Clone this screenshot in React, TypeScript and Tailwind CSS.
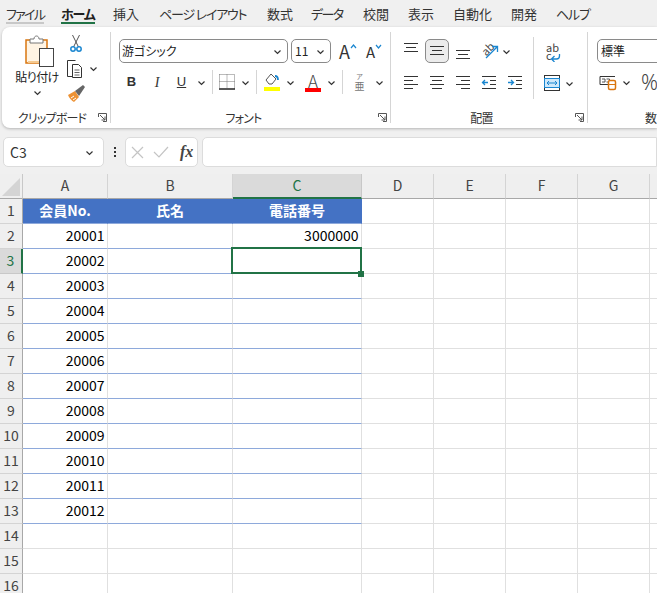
const jp = "font-['Noto_Sans_CJK_JP','Noto_Sans',sans-serif]";
const palt = "[font-feature-settings:'palt']";

const tabs = [
  { label: "ファイル", w: "w-[55px]", track: "tracking-[-1.7px]" },
  { label: "ホーム", w: "w-[52px]", track: "tracking-[-1.2px]" },
  { label: "挿入", w: "w-[46px]", track: "" },
  { label: "ページ レイアウト", w: "w-[108px]", track: "tracking-[-1.2px]" },
  { label: "数式", w: "w-[44px]", track: "" },
  { label: "データ", w: "w-[52px]", track: "tracking-[-1.6px]" },
  { label: "校閲", w: "w-[45px]", track: "" },
  { label: "表示", w: "w-[45px]", track: "" },
  { label: "自動化", w: "w-[58px]", track: "" },
  { label: "開発", w: "w-[45px]", track: "" },
  { label: "ヘルプ", w: "w-[50px]", track: "tracking-[-1.2px]" },
];

const Chev = ({ className = "" }: { className?: string }) => (
  <svg width="11" height="11" viewBox="0 0 11 11" fill="none" className={"shrink-0 " + className}>
    <path d="M2.500 4.500l3 3 3-3" stroke="#333" strokeWidth="1.200" />
  </svg>
);

const Launcher = () => (
  <svg width="9" height="9" viewBox="0 0 9 9" fill="none" stroke="#555" className="shrink-0">
    <path d="M.5 4V.5H8.500V8.500H5M2 2l5 5M7 3.500V7H3.500" />
  </svg>
);

const GroupLabel = ({ text, pad }: { text: string; pad: string }) => (
  <div className="mt-auto flex h-[11px] items-center pr-[3px]">
    <span className={"flex-1 text-center text-[12px] leading-[11px] tracking-[-0.8px] text-[#333] " + pad + " " + palt}>{text}</span>
    <Launcher />
  </div>
);

const Lines = ({ d, arrow }: { d: string; arrow?: string }) => (
  <svg width="16" height="20" viewBox="0 0 16 20" fill="none">
    <path d={d} stroke="#333" />
    {arrow && <path d={arrow} stroke="#1a86d0" strokeWidth="1.300" />}
  </svg>
);

const Combo = ({ text, className }: { text: string; className: string }) => (
  <div className={"flex h-[24px] items-center rounded-[5px] border border-[#8a8a8a] bg-white pr-[4px] " + className}>
    <span className={"flex-1 truncate text-[12px] text-[#222] " + palt}>{text}</span>
    <Chev />
  </div>
);

const VSep = () => <div className="mx-[5px] h-[24px] w-px bg-[#d5d5d5]" />;

const Caret = ({ up }: { up?: boolean }) => (
  <svg width="7" height="5" viewBox="0 0 7 5" fill="none" className="mb-[9px] shrink-0">
    <path d={up ? "M1 4l2.500-3L6 4" : "M1 1l2.500 3L6 1"} stroke="#1a86d0" strokeWidth="1.200" />
  </svg>
);

const ClipboardGroup = () => (
  <div className="my-[5px] flex w-[109px] shrink-0 flex-col border-r border-[#d5d5d5] pl-[6px]">
    <div className="flex">
      <div className="flex w-[58px] flex-col items-center">
        <svg width="30" height="33" viewBox="0 0 30 33" fill="none" className="ml-[5px] mt-[2px]">
          <rect x="1" y="6" width="21" height="23" fill="#fff4e4" stroke="#d9750f" strokeWidth="1.500" />
          <path d="M3 27h11v2H3z" fill="#f5c98f" />
          <path d="M5 9V5h4c0-4 5-4 5 0h4v4z" fill="#fff" stroke="#777" />
          <rect x="14.500" y="14.500" width="14" height="18" fill="#fff" stroke="#444" />
        </svg>
        <span className={"mt-[2px] text-[12px] leading-[16px] tracking-[-0.6px] text-[#222] " + palt}>貼り付け</span>
        <Chev className="mt-[2px]" />
      </div>
      <div className="flex flex-col pt-[2px]">
        <svg width="18" height="20" viewBox="0 0 18 20" fill="none" className="ml-[1px]">
          <path d="M5.500 1l6 12M12.500 1l-6 12" stroke="#555" />
          <circle cx="6" cy="15" r="2.200" stroke="#1a86d0" strokeWidth="1.500" />
          <circle cx="12" cy="15" r="2.200" stroke="#1a86d0" strokeWidth="1.500" />
        </svg>
        <div className="mt-[4px] flex items-center gap-[2px]">
          <svg width="20" height="20" viewBox="0 0 20 20" fill="none">
            <path d="M6.500 18.500h-5v-16h8" stroke="#333" />
            <path d="M6.500 6.500h6l3 3v10h-9z" fill="#fff" stroke="#333" />
            <path d="M8.500 12h5M8.500 14.500h5M8.500 17h5" stroke="#666" />
          </svg>
          <Chev />
        </div>
        <svg width="20" height="20" viewBox="0 0 20 20" className="mt-[6px]">
          <path d="M2 11l7-4 4 6-5 5c-2-1-5-4-6-7z" fill="#ed9234" />
          <path d="M5 14l3-2M7 16l3-2" stroke="#fff" />
          <path d="M9 7l8-6 2 2-6 9z" fill="#666" />
        </svg>
      </div>
    </div>
    <GroupLabel text="クリップボード" pad="pr-[2px]" />
  </div>
);

const FontGroup = () => (
  <div className="my-[5px] flex w-[280px] shrink-0 flex-col border-r border-[#d5d5d5] pl-[8px]">
    <div className="mt-[7px] flex gap-[3px]">
      <Combo text="游ゴシック" className="w-[169px] pl-[2px]" />
      <Combo text="11" className="w-[40px] pl-[3px]" />
      <div className="flex w-[55px] items-center pl-[5px] text-[#333]">
        <span className="text-[18px] leading-none">A</span>
        <Caret up />
        <span className="ml-[9px] text-[15px] leading-none">A</span>
        <Caret />
      </div>
    </div>
    <div className="mt-[6px] flex h-[26px] items-center text-[#333]">
      <span className="w-[25px] text-center font-['Liberation_Sans',sans-serif] text-[13px] font-bold">B</span>
      <span className="w-[26px] text-center font-['Liberation_Serif',serif] text-[14px] italic">I</span>
      <span className="w-[23px] text-center font-['Liberation_Sans',sans-serif] text-[13px] underline">U</span>
      <Chev className="ml-[3px]" />
      <VSep />
      <svg width="16" height="16" viewBox="0 0 16 16" fill="none" className="ml-[1px]">
        <path d="M.5.500h15v14M.5.500v14M8 .5v14M.5 7.500h15" stroke="#777" strokeDasharray="1 1" />
        <path d="M0 15h16" stroke="#222" strokeWidth="1.500" />
      </svg>
      <Chev className="ml-[5px]" />
      <VSep />
      <svg width="17" height="20" viewBox="0 0 17 20" fill="none" className="ml-[2px]">
        <path d="M2 8l5-6 5 5-4 5H5z" fill="#fff" stroke="#555" />
        <path d="M11 4c2 0 3 1 3 4" stroke="#1a86d0" strokeWidth="1.800" />
        <rect x="0" y="15" width="16" height="4" fill="#ffff00" />
      </svg>
      <Chev className="ml-[4px]" />
      <div className="ml-[9px] flex w-[16px] flex-col items-center">
        <span className="text-[17px] font-light leading-[15px] text-[#444]">A</span>
        <span className="h-[4px] w-[16px] bg-[#ff0000]" />
      </div>
      <Chev className="ml-[5px]" />
      <VSep />
      <div className={"ml-[4px] flex w-[15px] flex-col items-center text-[#777] " + jp}>
        <span className="text-[7px] leading-[7px]">ア</span>
        <span className="text-[10px] leading-[11px]">亜</span>
      </div>
      <Chev className="ml-[7px]" />
    </div>
    <GroupLabel text="フォント" pad="pr-[10px]" />
  </div>
);

const AlignGroup = () => (
  <div className="my-[5px] flex w-[197px] shrink-0 flex-col border-r border-[#d5d5d5] pl-[7px]">
    <div className="flex">
      <div className="w-[135px] shrink-0">
        <div className="mt-[7px] flex h-[24px] items-center">
          <div className="flex w-[26px] justify-center"><Lines d="M1 2.500h14M3 6.500h10M1 10.500h14" /></div>
          <div className="mx-px flex h-[24px] w-[24px] items-center justify-center rounded-[5px] border border-[#8a8a8a] bg-[#ececec]">
            <Lines d="M1 5.500h14M3 9.500h10M1 13.500h14" />
          </div>
          <div className="flex w-[26px] justify-center"><Lines d="M1 9.500h14M3 13.500h10M1 17.500h14" /></div>
          <div className="flex w-[26px] justify-center">
            <svg width="22" height="20" viewBox="0 0 22 20" fill="none">
              <text x="10" y="12" fontSize="11" textAnchor="middle" fill="#444" transform="rotate(-45 10 8)">ab</text>
              <path d="M8 17L19 6M14 5.500h5.500V11" stroke="#1a86d0" strokeWidth="1.300" />
            </svg>
          </div>
          <Chev className="ml-[-1px]" />
        </div>
        <div className="mt-[6px] flex h-[26px] items-center">
          <div className="flex w-[26px] justify-center"><Lines d="M1 4.500h14M1 8.500h9M1 12.500h14M1 16.500h9" /></div>
          <div className="flex w-[26px] justify-center"><Lines d="M1 4.500h14M3 8.500h10M1 12.500h14M3 16.500h10" /></div>
          <div className="flex w-[26px] justify-center"><Lines d="M1 4.500h14M6 8.500h9M1 12.500h14M6 16.500h9" /></div>
          <div className="flex w-[26px] justify-center"><Lines d="M1 4.500h14M9 8.500h6M9 12.500h6M1 16.500h14" arrow="M7 10.500H1.500M4 8l-2.500 2.500L4 13" /></div>
          <div className="flex w-[26px] justify-center"><Lines d="M1 4.500h14M9 8.500h6M9 12.500h6M1 16.500h14" arrow="M1 10.500h5.500M4 8l2.500 2.500L4 13" /></div>
        </div>
      </div>
      <div className="mt-[5px] h-[62px] w-px bg-[#d5d5d5]" />
      <div className="flex flex-1 flex-col pl-[10px]">
        <svg width="20" height="24" viewBox="0 0 20 24" fill="none" className="mt-[6px]">
          <text x="2" y="14" fontSize="11" fill="#444">ab</text>
          <text x="2" y="22" fontSize="11" fill="#444">c</text>
          <path d="M15.500 16v2c0 2-1 3-3 3H8M10.500 18l-3 3 3 3" stroke="#1a86d0" strokeWidth="1.300" />
        </svg>
        <div className="mt-[13px] flex items-center gap-[4px]">
          <svg width="16" height="16" viewBox="0 0 16 16" fill="none">
            <rect x=".5" y=".5" width="15" height="15" fill="#fff" stroke="#333" />
            <rect x=".5" y="3.500" width="15" height="9" fill="#cfe8fa" stroke="#1a86d0" />
            <path d="M3 8h10M5 6L3 8l2 2M11 6l2 2-2 2" stroke="#1a86d0" />
          </svg>
          <Chev />
        </div>
      </div>
    </div>
    <GroupLabel text="配置" pad="pr-[10px]" />
  </div>
);

const NumberGroup = () => (
  <div className="my-[5px] flex w-[80px] shrink-0 flex-col pl-[9px]">
    <div className="mt-[7px] flex h-[24px] w-[71px] items-center rounded-l-[5px] border border-[#8a8a8a] bg-white pl-[3px] text-[12px] text-[#222]">
      標準
    </div>
    <div className="mt-[6px] flex h-[26px] items-center">
      <svg width="20" height="18" viewBox="0 0 20 18" fill="none" className="ml-[2px]">
        <path d="M1 3.500h15M1 3.500v8h8" stroke="#333" />
        <path d="M3 6h3v3H3M7.500 6h3v3h-3" stroke="#555" />
        <rect x="9.500" y="7.500" width="7" height="9" rx="1.500" fill="#fff" stroke="#d9750f" strokeWidth="1.500" />
        <path d="M9.500 11.500h7" stroke="#d9750f" />
      </svg>
      <Chev className="ml-[2px]" />
      <span className="ml-[9px] font-['Noto_Sans',sans-serif] text-[21px] font-light leading-none text-[#444]">%</span>
    </div>
    <div className="mt-auto h-[11px] pl-[48px] text-[12px] leading-[11px] text-[#333]">数</div>
  </div>
);

const columns = [
  { name: "A", header: "会員No." },
  { name: "B", header: "氏名" },
  { name: "C", header: "電話番号" },
  { name: "D" },
  { name: "E" },
  { name: "F" },
  { name: "G" },
  { name: "H" },
];

const rows = Array.from({ length: 16 }, (_, i) => i + 1);
const gridCols = "grid grid-cols-[23px_85px_125px_129px_72px_72px_72px_72px_72px]";

const cellClass = (row: number, col: number) => {
  const inTable = row <= 13 && col <= 2;
  const parts = ["relative h-[25px] border-b border-r text-[14px] leading-[22px] text-black"];
  if (row === 1 && inTable) parts.push("bg-[#4472c4] border-b-[#8ea9db] border-r-[#4472c4] text-center font-bold text-white leading-[23px]");
  else if (inTable) parts.push("border-b-[#8ea9db] border-r-[#e0e0e0] text-right pr-[2.500px]");
  else parts.push("border-b-[#e0e0e0] border-r-[#e0e0e0]");
  if (col === 2 && inTable) parts.push("border-r-[#8ea9db]");
  return parts.join(" ");
};

const cellText = (row: number, col: number) => {
  if (row === 1) return columns[col].header ?? "";
  if (col === 0 && row <= 13) return String(20000 + row - 1);
  if (col === 2 && row === 2) return "3000000";
  return "";
};

const Sheet = () => (
  <div className={gridCols + " mt-[7px] bg-white"}>
    <div className="flex h-[25px] items-end justify-end border-b border-r border-b-[#a8a8a8] border-r-[#c8c8c8] bg-[#efefef] p-[2px]">
      <svg width="18" height="18" viewBox="0 0 18 18"><path d="M18 0v18H0z" fill="#d4d4d4" /></svg>
    </div>
    {columns.map((c, i) => (
      <div
        key={c.name}
        className={
          i === 2
            ? "h-[25px] border-b-2 border-r border-b-[#217346] border-r-[#c8c8c8] bg-[#dadada] text-center text-[14px] leading-[23px] text-[#217346]"
            : "h-[25px] border-b border-r border-b-[#a8a8a8] border-r-[#d4d4d4] bg-[#efefef] text-center text-[14px] leading-[23px] text-[#444]"
        }
      >
        {c.name}
      </div>
    ))}
    {rows.map((r) => (
      <div key={r} className="contents">
        <div
          className={
            r === 3
              ? "h-[25px] border-b border-r-2 border-b-[#c8c8c8] border-r-[#217346] bg-[#dadada] text-center text-[14px] leading-[23px] text-[#217346]"
              : "h-[25px] border-b border-r border-b-[#d4d4d4] border-r-[#a8a8a8] bg-[#efefef] text-center text-[14px] leading-[23px] text-[#444]"
          }
        >
          {r}
        </div>
        {columns.map((c, i) => (
          <div key={c.name} className={cellClass(r, i)}>
            {cellText(r, i)}
            {r === 3 && i === 2 && (
              <div className="absolute left-[-2px] top-[-2px] z-10 h-[27px] w-[131px] border-2 border-[#217346]">
                <div className="absolute bottom-[-5px] right-[-4px] h-[6px] w-[6px] bg-[#217346]" />
              </div>
            )}
          </div>
        ))}
      </div>
    ))}
  </div>
);

export default function App() {
  return (
    <div className={"h-[593px] w-[657px] overflow-hidden bg-[#f0f0f0] " + jp}>
      <div className={"flex h-[27px] items-center text-[13px] text-[#333] " + palt}>
        {tabs.map((t, i) => (
          <div key={t.label} className={t.w + " relative shrink-0 whitespace-nowrap pl-[6px] " + t.track + (i === 1 ? " font-bold text-[#222]" : "")}>
            {t.label}
            {i === 0 && <div className="absolute left-[6px] top-[18px] h-[2px] w-[38px] bg-[#c8c8c8]" />}
            {i === 1 && <div className="absolute left-[6px] top-[18px] h-[2px] w-[34px] bg-[#217346]" />}
          </div>
        ))}
      </div>

      <div className="ml-[2px] flex h-[101px] overflow-hidden rounded-l-[8px] bg-white shadow-[0_1px_3px_rgba(0,0,0,0.25)]">
        <ClipboardGroup />
        <FontGroup />
        <AlignGroup />
        <NumberGroup />
      </div>

      <div className="mt-[9px] flex h-[30px] pl-[3px]">
        <div className="flex w-[101px] items-center rounded-[5px] border border-[#dcdcdc] bg-white pl-[6px] pr-[8px] text-[14px] text-[#333]">
          <span className="flex-1">C3</span>
          <Chev />
        </div>
        <div className="flex w-[21px] flex-col items-center justify-center gap-[2px]">
          <span className="h-[2px] w-[2px] bg-[#333]" />
          <span className="h-[2px] w-[2px] bg-[#333]" />
          <span className="h-[2px] w-[2px] bg-[#333]" />
        </div>
        <div className="flex w-[73px] items-center gap-[9px] rounded-[5px] border border-[#dcdcdc] bg-white pl-[5px]">
          <svg width="13" height="13" viewBox="0 0 13 13" fill="none"><path d="M1 1l11 11M12 1L1 12" stroke="#c4c4c4" strokeWidth="1.200" /></svg>
          <svg width="16" height="14" viewBox="0 0 16 14" fill="none"><path d="M1 7l5 5L15 2" stroke="#c4c4c4" strokeWidth="1.200" /></svg>
          <span className="ml-[2px] font-['Liberation_Serif',serif] text-[16px] font-bold italic leading-none text-[#444]">fx</span>
        </div>
        <div className="ml-[4px] flex-1 rounded-l-[5px] border border-[#dcdcdc] bg-white" />
      </div>

      <Sheet />
    </div>
  );
}
